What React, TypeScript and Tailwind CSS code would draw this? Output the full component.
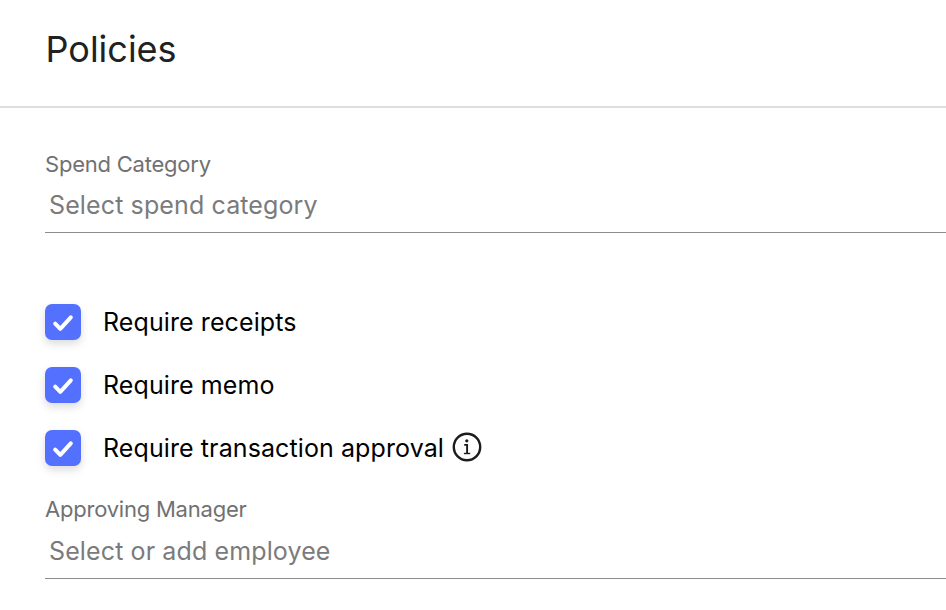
function Check({ label, info }: { label: string; info?: boolean }) {
  return (
    <div className="flex h-9 items-center">
      <span className="flex size-9 items-center justify-center rounded-[7px] bg-[#5470ff] shadow-[0_4px_8px_rgba(0,0,0,0.14)]">
        <svg width="36" height="36" viewBox="0 0 36 36" fill="none">
          <path d="M10.2 19.6l5.1 5.2L25.8 13.3" stroke="#fff" strokeWidth="4" strokeLinecap="round" strokeLinejoin="round" />
        </svg>
      </span>
      <span className="ml-[22px] whitespace-nowrap text-[25px] leading-9 tracking-[0.1px] text-black">{label}</span>
      {info && (
        <svg className="mb-0.5 ml-2" width="30" height="30" viewBox="0 0 30 30" fill="none">
          <circle cx="15" cy="15" r="13.2" stroke="#1c1c1c" strokeWidth="2.4" />
          <circle cx="14.8" cy="8.8" r="1.6" fill="#1c1c1c" />
          <path d="M12.2 12.9h2.9v8.4" stroke="#1c1c1c" strokeWidth="1.9" />
          <path d="M11.9 21.5h6.3" stroke="#1c1c1c" strokeWidth="1.4" />
        </svg>
      )}
    </div>
  );
}

function Field({ label, placeholder, tall }: { label: string; placeholder: string; tall?: boolean }) {
  return (
    <div className="border-b border-[#8c8c8c]">
      <div className="text-[22px] leading-7 tracking-[-0.22px] text-[#717171]">{label}</div>
      <div className={`pl-1 text-[25px] leading-[54px] tracking-[0.12px] text-[#7b7b7b] ${tall ? "h-[55px] pt-px" : "h-[54px]"}`}>
        {placeholder}
      </div>
    </div>
  );
}

export default function App() {
  return (
    <main className="h-[610px] overflow-hidden bg-white font-[Inter,sans-serif]">
      <header className="h-[108px] border-b-2 border-[#dedede] pl-[45.5px] pt-[26px]">
        <h1 className="text-[36px] leading-[46px] text-[#212121]">Policies</h1>
      </header>
      <div className="pl-[45px] pt-[42px]">
        <Field label="Spend Category" placeholder="Select spend category" />
        <div className="mt-[71px] mb-[29px] flex flex-col gap-[27px]">
          <Check label="Require receipts" />
          <Check label="Require memo" />
          <Check label="Require transaction approval" info />
        </div>
        <Field label="Approving Manager" placeholder="Select or add employee" tall />
      </div>
    </main>
  );
}
